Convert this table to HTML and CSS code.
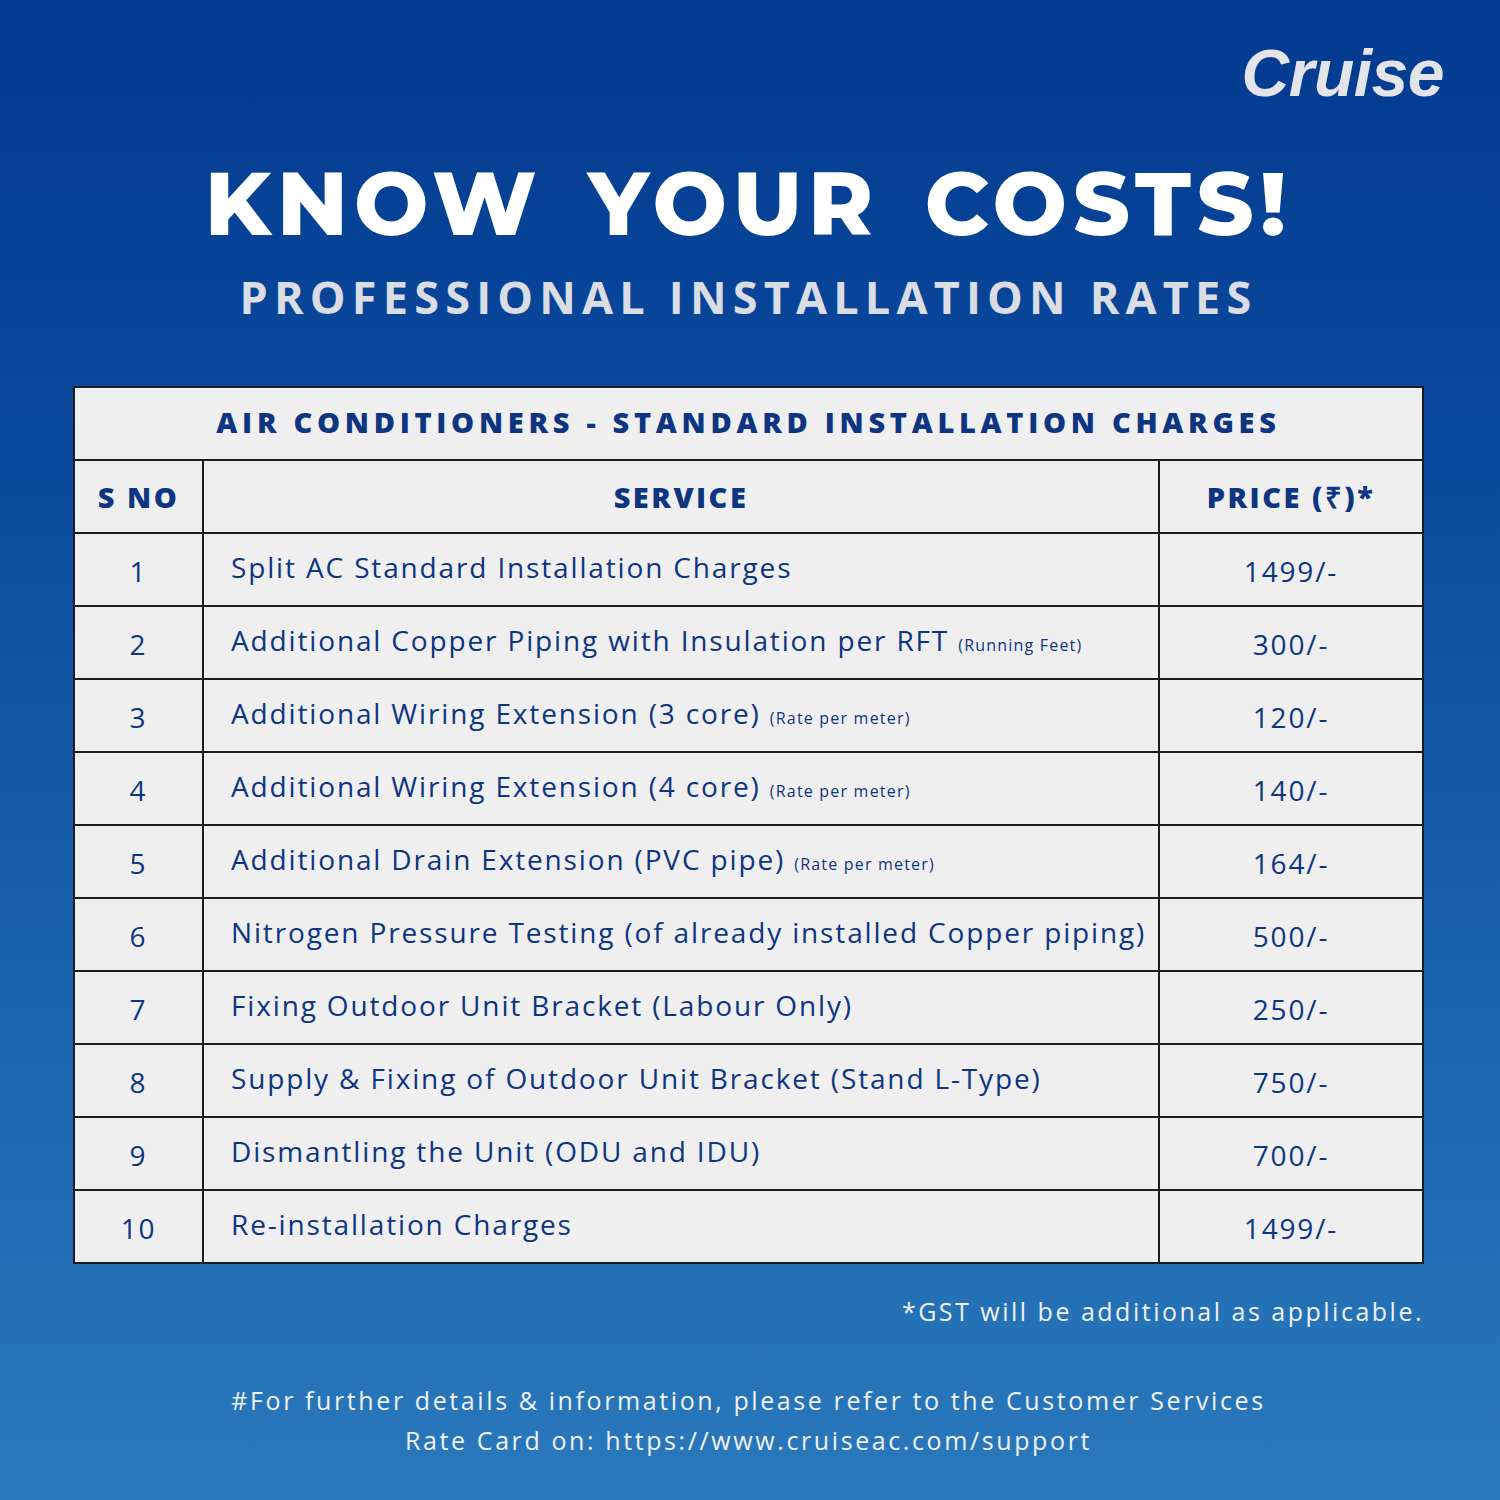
FILE: index.html
```html
<!DOCTYPE html>
<html lang="en">
<head>
<meta charset="utf-8">
<title>Know Your Costs - Cruise</title>
<link rel="stylesheet" href="styles.css">
</head>
<body>
<div class="page">
  <header class="top">
    <div class="logo">Cruise</div>
  </header>
  <h1 class="title">KNOW YOUR COSTS!</h1>
  <h2 class="subtitle">PROFESSIONAL INSTALLATION RATES</h2>

  <table class="rates">
    <thead>
      <tr><th colspan="3" class="caption">AIR CONDITIONERS - STANDARD INSTALLATION CHARGES</th></tr>
      <tr class="head"><th class="c-no">S NO</th><th class="c-svc">SERVICE</th><th class="c-price">PRICE (₹)*</th></tr>
    </thead>
    <tbody>
      <tr><td class="c-no">1</td><td class="c-svc">Split AC Standard Installation Charges</td><td class="c-price">1499/-</td></tr>
      <tr><td class="c-no">2</td><td class="c-svc">Additional Copper Piping with Insulation per RFT <small>(Running Feet)</small></td><td class="c-price">300/-</td></tr>
      <tr><td class="c-no">3</td><td class="c-svc">Additional Wiring Extension (3 core) <small>(Rate per meter)</small></td><td class="c-price">120/-</td></tr>
      <tr><td class="c-no">4</td><td class="c-svc">Additional Wiring Extension (4 core) <small>(Rate per meter)</small></td><td class="c-price">140/-</td></tr>
      <tr><td class="c-no">5</td><td class="c-svc">Additional Drain Extension (PVC pipe) <small>(Rate per meter)</small></td><td class="c-price">164/-</td></tr>
      <tr><td class="c-no">6</td><td class="c-svc">Nitrogen Pressure Testing (of already installed Copper piping)</td><td class="c-price">500/-</td></tr>
      <tr><td class="c-no">7</td><td class="c-svc">Fixing Outdoor Unit Bracket (Labour Only)</td><td class="c-price">250/-</td></tr>
      <tr><td class="c-no">8</td><td class="c-svc">Supply &amp; Fixing of Outdoor Unit Bracket (Stand L-Type)</td><td class="c-price">750/-</td></tr>
      <tr><td class="c-no">9</td><td class="c-svc">Dismantling the Unit (ODU and IDU)</td><td class="c-price">700/-</td></tr>
      <tr><td class="c-no">10</td><td class="c-svc">Re-installation Charges</td><td class="c-price">1499/-</td></tr>
    </tbody>
  </table>

  <p class="gst">*GST will be additional as applicable.</p>
  <p class="footer">#For further details &amp; information, please refer to the Customer Services<br>Rate Card on: https://www.cruiseac.com/support</p>
</div>
</body>
</html>
```
FILE: styles.css
```css
html, body {
  margin: 0;
  padding: 0;
}
body {
  width: 1500px;
  height: 1500px;
  background: linear-gradient(180deg, #023a8f 0%, #0a4a9c 30%, #1a63ad 65%, #2a79bb 100%);
  font-family: "Open Sans", "Noto Sans", sans-serif;
  overflow: hidden;
}
.page {
  box-sizing: border-box;
  width: 1500px;
  height: 1500px;
  padding: 38px 76px 0 73px;
  display: flex;
  flex-direction: column;
}
.top {
  display: flex;
  justify-content: flex-end;
  height: 70px;
  margin-right: -20px;
}
.logo {
  font-family: "Liberation Sans", sans-serif;
  font-weight: 700;
  font-style: italic;
  font-size: 66px;
  line-height: 70px;
  color: #e2e4ea;
  letter-spacing: -0.5px;
}
.title {
  margin: 46px 0 0 0;
  text-align: center;
  font-family: "Montserrat", "Open Sans", sans-serif;
  font-weight: 800;
  font-size: 88px;
  line-height: 100px;
  letter-spacing: 6px;
  word-spacing: 14px;
  color: #ffffff;
}
.subtitle {
  margin: 16px 0 0 0;
  text-align: center;
  font-family: "Open Sans", sans-serif;
  font-weight: 700;
  font-size: 45px;
  line-height: 54px;
  letter-spacing: 6.2px;
  color: #dadde4;
}
.rates {
  margin-top: 62px;
  width: 1351px;
  border-collapse: collapse;
  background: #efefef;
  color: #0d3581;
  border: 2px solid #1b1d22;
}
.rates th, .rates td {
  border: 2px solid #1b1d22;
  height: 73px;
  padding: 0;
  box-sizing: border-box;
}
.caption {
  font-family: "Open Sans", sans-serif;
  font-weight: 800;
  font-size: 29px;
  letter-spacing: 4.7px;
  text-align: center;
  padding-bottom: 4px !important;
}
.head th {
  font-family: "Open Sans", sans-serif;
  font-weight: 800;
  font-size: 29px;
  letter-spacing: 2.5px;
}
.c-no {
  width: 129px;
  text-align: center;
}
.c-price {
  width: 264px;
  text-align: center;
}
.rates td {
  font-size: 28px;
  letter-spacing: 1.85px;
  font-weight: 500;
}
.rates td.c-svc {
  padding-left: 27px;
  white-space: nowrap;
  padding-bottom: 6px;
}
.rates td.c-no, .rates td.c-price {
  padding-top: 2px;
}
.rates small {
  font-size: 16px;
  letter-spacing: 1.2px;
}
.gst {
  margin: 30px 0 0 0;
  text-align: right;
  font-size: 25px;
  letter-spacing: 2.5px;
  color: #eef1f6;
}
.footer {
  margin: 52px 0 0 0;
  text-align: center;
  font-size: 25px;
  line-height: 40px;
  letter-spacing: 2.6px;
  color: #eef1f6;
}
```
